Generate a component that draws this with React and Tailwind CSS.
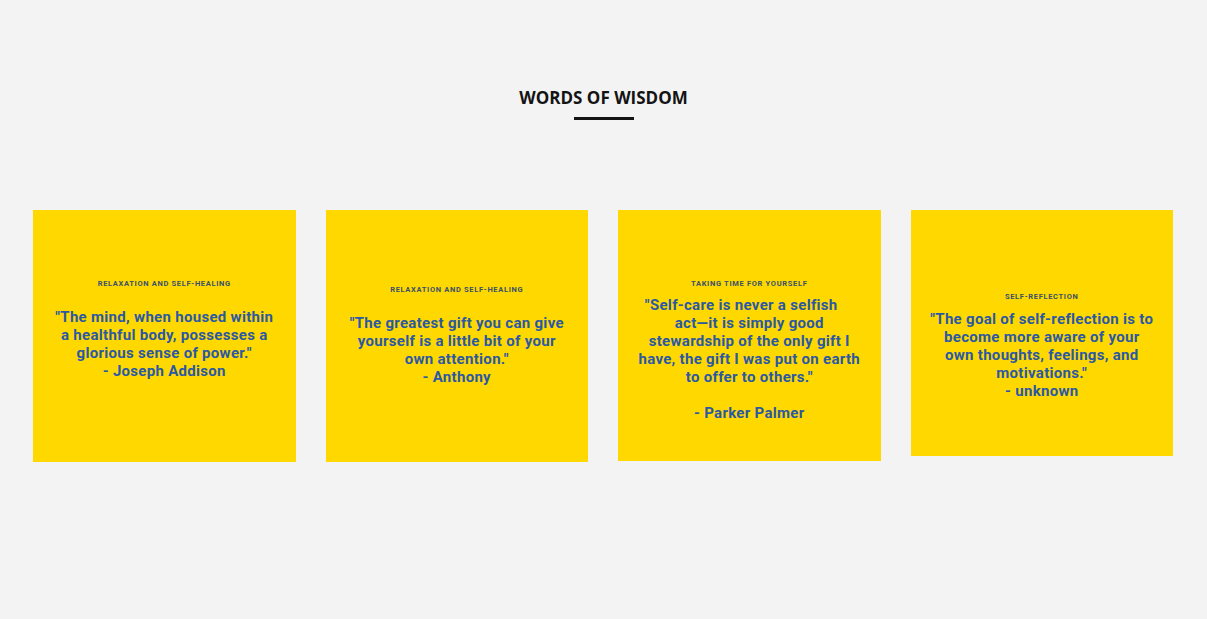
export default function App() {
  const cards = [
    {
      label: "RELAXATION AND SELF-HEALING",
      h: "h-[252px]",
      pt: "pt-[69px]",
      gap: "mt-[19px]",
      lines: [
        '"The mind, when housed within',
        "a healthful body, possesses a",
        'glorious sense of power."',
        "- Joseph Addison",
      ],
    },
    {
      label: "RELAXATION AND SELF-HEALING",
      h: "h-[252px]",
      pt: "pt-[75px]",
      gap: "mt-[19px]",
      lines: [
        '"The greatest gift you can give',
        "yourself is a little bit of your",
        'own attention."',
        "- Anthony",
      ],
    },
    {
      label: "TAKING TIME FOR YOURSELF",
      h: "h-[251px]",
      pt: "pt-[69px]",
      gap: "mt-[7px]",
      lines: [
        '"Self-care is never a selfish\u00a0\u00a0\u00a0\u00a0',
        "act\u2014it is simply good",
        "stewardship of the only gift I",
        "have, the gift I was put on earth",
        'to offer to others."',
        "\u00a0",
        "- Parker Palmer",
      ],
    },
    {
      label: "SELF-REFLECTION",
      h: "h-[246px]",
      pt: "pt-[82px]",
      gap: "mt-[8px]",
      lines: [
        '"The goal of self-reflection is to',
        "become more aware of your",
        "own thoughts, feelings, and",
        'motivations."',
        "- unknown",
      ],
    },
  ];
  return (
    <div className="min-h-[619px] w-full bg-[#f3f3f3] flex flex-col items-center">
      <h2
        className="mt-[87px] text-[17px] leading-[22px] font-bold text-[#141414]"
        style={{ fontFamily: '"Open Sans", sans-serif' }}
      >
        WORDS OF WISDOM
      </h2>
      <div className="mt-[8px] w-[60px] h-[3px] bg-[#141414]" />
      <div className="mt-[90px] w-full pl-[33px] pr-[34px] grid grid-cols-4 gap-[30px] items-start">
        {cards.map((c, i) => (
          <div
            key={i}
            className={`bg-[#ffd800] ${c.h} ${c.pt} flex flex-col items-center text-center`}
            style={{ fontFamily: "Roboto, sans-serif" }}
          >
            <div className="text-[7.5px] leading-[10px] font-bold tracking-[0.09em] text-[#3a5068]">
              {c.label}
            </div>
            <div className={`${c.gap} text-[15px] leading-[18px] font-bold tracking-[0.3px] text-[#2b58a4]`}>
              {c.lines.map((l, j) => (
                <div key={j}>{l}</div>
              ))}
            </div>
          </div>
        ))}
      </div>
    </div>
  );
}
